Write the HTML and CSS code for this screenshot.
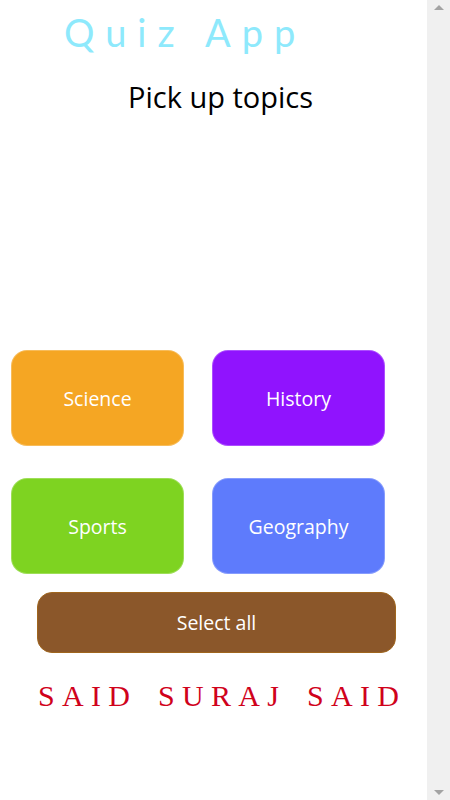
FILE: index.html
```html
<!DOCTYPE html>
<html lang="en">
<head>
<meta charset="utf-8">
<title>Quiz App</title>
<link rel="stylesheet" href="styles.css">
</head>
<body>
<div class="window">
  <main class="page">
    <h1 class="title">Quiz App</h1>
    <h2 class="subtitle">Pick up topics</h2>
    <div class="topics">
      <button class="topic science">Science</button>
      <button class="topic history">History</button>
      <button class="topic sports">Sports</button>
      <button class="topic geography">Geography</button>
    </div>
    <button class="select-all">Select all</button>
    <p class="author">SAID SURAJ SAID</p>
  </main>
  <div class="scrollbar">
    <span class="arrow up"></span>
    <span class="arrow down"></span>
  </div>
</div>
</body>
</html>
```
FILE: styles.css
```css
html, body {
  margin: 0;
  padding: 0;
  height: 800px;
  overflow: hidden;
  background: #ffffff;
}

.window {
  display: flex;
  width: 450px;
  height: 800px;
}

.page {
  flex: 1;
  display: flex;
  flex-direction: column;
  font-family: "Open Sans", "Noto Sans", sans-serif;
}

.title {
  margin: 0;
  padding: 9px 0 0 64px;
  font-family: "Lato", "Noto Sans", sans-serif;
  font-weight: 400;
  font-size: 38px;
  line-height: 46px;
  letter-spacing: 11px;
  white-space: nowrap;
  color: #8ee9fc;
}

.subtitle {
  margin: 0;
  padding: 22px 0 0 14px;
  text-align: center;
  font-weight: 400;
  font-size: 29px;
  line-height: 40px;
  color: #000000;
}

.topics {
  display: grid;
  grid-template-columns: 173px 173px;
  column-gap: 28px;
  row-gap: 32px;
  margin: 233px 0 0 11px;
}

.topic {
  height: 96px;
  border-radius: 16px;
  border: 1px solid rgba(255, 255, 255, 0.25);
  font-family: "Open Sans", "Noto Sans", sans-serif;
  font-size: 19.5px;
  color: #ffffff;
  padding: 0;
}

.science { background: #f5a623; }
.history { background: #9013fe; }
.sports { background: #7ed321; }
.geography { background: #5e7bfc; }

.select-all {
  margin: 18px 0 0 37px;
  width: 359px;
  height: 61px;
  border-radius: 15px;
  border: 1px solid #a0661e;
  background: #8b572a;
  color: #ffffff;
  font-family: "Open Sans", "Noto Sans", sans-serif;
  font-size: 19.5px;
  padding: 0;
}

.author {
  margin: 25px 0 0 38px;
  font-family: "Liberation Serif", "DejaVu Serif", serif;
  font-size: 30px;
  line-height: 36px;
  letter-spacing: 7.3px;
  word-spacing: 6px;
  white-space: nowrap;
  color: #d0021b;
}

.scrollbar {
  width: 23px;
  background: #f0f0f0;
  display: flex;
  flex-direction: column;
  justify-content: space-between;
  align-items: center;
  padding: 5px 0;
  box-sizing: border-box;
}

.arrow {
  width: 0;
  height: 0;
  border-left: 5px solid transparent;
  border-right: 5px solid transparent;
}

.arrow.up { border-bottom: 5px solid #a3a3a3; }
.arrow.down { border-top: 5px solid #a3a3a3; }
```
